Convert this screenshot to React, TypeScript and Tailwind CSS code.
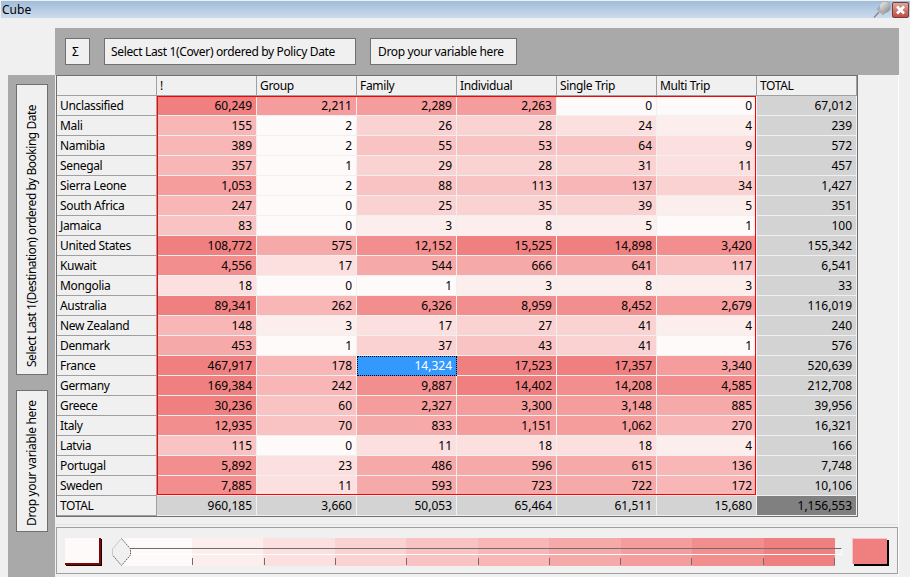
const COLUMNS = ["!", "Group", "Family", "Individual", "Single Trip", "Multi Trip", "TOTAL"];

const ROWS: [string, string[]][] = [
  ["Unclassified", ["60,249", "2,211", "2,289", "2,263", "0", "0", "67,012"]],
  ["Mali", ["155", "2", "26", "28", "24", "4", "239"]],
  ["Namibia", ["389", "2", "55", "53", "64", "9", "572"]],
  ["Senegal", ["357", "1", "29", "28", "31", "11", "457"]],
  ["Sierra Leone", ["1,053", "2", "88", "113", "137", "34", "1,427"]],
  ["South Africa", ["247", "0", "25", "35", "39", "5", "351"]],
  ["Jamaica", ["83", "0", "3", "8", "5", "1", "100"]],
  ["United States", ["108,772", "575", "12,152", "15,525", "14,898", "3,420", "155,342"]],
  ["Kuwait", ["4,556", "17", "544", "666", "641", "117", "6,541"]],
  ["Mongolia", ["18", "0", "1", "3", "8", "3", "33"]],
  ["Australia", ["89,341", "262", "6,326", "8,959", "8,452", "2,679", "116,019"]],
  ["New Zealand", ["148", "3", "17", "27", "41", "4", "240"]],
  ["Denmark", ["453", "1", "37", "43", "41", "1", "576"]],
  ["France", ["467,917", "178", "14,324", "17,523", "17,357", "3,340", "520,639"]],
  ["Germany", ["169,384", "242", "9,887", "14,402", "14,208", "4,585", "212,708"]],
  ["Greece", ["30,236", "60", "2,327", "3,300", "3,148", "885", "39,956"]],
  ["Italy", ["12,935", "70", "833", "1,151", "1,062", "270", "16,321"]],
  ["Latvia", ["115", "0", "11", "18", "18", "4", "166"]],
  ["Portugal", ["5,892", "23", "486", "596", "615", "136", "7,748"]],
  ["Sweden", ["7,885", "11", "593", "723", "722", "172", "10,106"]],
];

const TOTALS = ["960,185", "3,660", "50,053", "65,464", "61,511", "15,680", "1,156,553"];

const LEVELS = [
  "bg-[#fffafa]",
  "bg-[#fdeeee]",
  "bg-[#fcdfdf]",
  "bg-[#fad2d2]",
  "bg-[#f9c3c3]",
  "bg-[#f8b6b6]",
  "bg-[#f6a9a9]",
  "bg-[#f59c9c]",
  "bg-[#f38e8e]",
  "bg-[#f08080]",
];

const THRESHOLDS = [3, 9, 25, 43, 130, 420, 1000, 3400, 14300];

const levelOf = (text: string) => {
  const value = Number(text.replace(/,/g, ""));
  return THRESHOLDS.filter((limit) => value >= limit).length;
};

const BUTTON = "flex items-center bg-[#f0f0f0] border border-[#707070] tracking-[-0.35px]";
const NUMBER = "flex items-center justify-end pr-[4px] border-r border-b border-[#f0f0f0]";
const HEADER = "flex items-center pl-[3px] bg-[#f0f0f0] border-r border-b border-[#a0a0a0] tracking-[-0.35px]";

const Pin = () => (
  <svg width="18" height="17" viewBox="0 0 18 17">
    <defs>
      <linearGradient id="pinBall" x1="0" y1="0" x2="1" y2="1">
        <stop offset="0" stopColor="#f6f6f6" />
        <stop offset="0.5" stopColor="#bdbdbd" />
        <stop offset="1" stopColor="#7f7f7f" />
      </linearGradient>
    </defs>
    <path d="M1 16.5 L6 11" stroke="#8a8a8a" strokeWidth="1.5" />
    <path d="M4 8 L10 14 L13 11 L7 5 Z" fill="#b4b4b4" stroke="#8f8f8f" strokeWidth="0.5" />
    <circle cx="12" cy="6" r="5.5" fill="url(#pinBall)" stroke="#9a9a9a" strokeWidth="0.5" />
  </svg>
);

const Close = () => (
  <div className="flex items-center justify-center w-[17px] h-[16px] rounded-[2px] border border-[#7a3a36] bg-gradient-to-b from-[#d8a8a2] to-[#bd4d44]">
    <svg width="11" height="10" viewBox="0 0 11 10">
      <path d="M2 1.5 L9 8.5 M9 1.5 L2 8.5" stroke="#ffffff" strokeWidth="2.6" />
    </svg>
  </div>
);

const Thumb = () => (
  <svg width="19" height="28" viewBox="0 0 19 28" className="absolute left-[-8px] top-0">
    <path d="M9.5 0.5 L18.5 11 L18.5 17 L9.5 27.5 L0.5 17 L0.5 11 Z" fill="#f0f0f0" />
    <path d="M0.5 17 L0.5 11 L9.5 0.5" fill="none" stroke="#c8c8c8" />
    <path d="M9.5 0.5 L18.5 11 L18.5 17 L9.5 27.5 L0.5 17" fill="none" stroke="#555555" strokeDasharray="1.5 1" />
  </svg>
);

const App = () => {
  return (
    <div className="flex flex-col w-[910px] h-[577px] overflow-hidden bg-[#f0f0f0] text-[12px] text-black font-['Noto_Sans','Liberation_Sans',sans-serif]">
      <div className="flex items-center justify-between h-[17px] mt-px ml-px pl-px pr-px bg-gradient-to-b from-[#a0bcda] to-[#cddcee]">
        <span>Cube</span>
        <div className="flex items-center gap-px">
          <Pin />
          <Close />
        </div>
      </div>

      <div className="flex items-center gap-[14px] w-[844px] h-[47px] mt-[10px] ml-[55px] pl-[10px] bg-[#a9a9a9]">
        <div className={`${BUTTON} pl-[6px] w-[25px] h-[27px]`}>Σ</div>
        <div className={`${BUTTON} pl-[6px] w-[252px] h-[27px]`}>Select Last 1(Cover) ordered by Policy Date</div>
        <div className={`${BUTTON} pl-[7px] w-[147px] h-[27px]`}>Drop your variable here</div>
      </div>

      <div className="flex flex-1 ml-[8px]">
        <div className="flex flex-col items-center gap-[15px] w-[47px] pt-[9px] bg-[#a9a9a9]">
          <div className={`${BUTTON} justify-center w-[32px] h-[291px] pb-[12px] rotate-180 [writing-mode:vertical-rl] tracking-[-0.47px]`}>
            Select Last 1(Destination) ordered by Booking Date
          </div>
          <div className={`${BUTTON} justify-center w-[32px] h-[142px] pb-[4px] rotate-180 [writing-mode:vertical-rl]`}>
            Drop your variable here
          </div>
        </div>

        <div className="flex flex-col w-[844px] border-r border-white">
          <div className="h-[450px] pl-px border-b border-[#e4e4e4]">
            <div className="relative grid grid-cols-[repeat(8,100px)] grid-rows-[repeat(22,20px)] w-[802px] h-[442px] border-t border-r-2 border-b-2 border-l border-[#707070]">
              <div className={HEADER} />
              {COLUMNS.map((name) => (
                <div key={name} className={HEADER}>
                  {name}
                </div>
              ))}

              {ROWS.map(([name, values]) => (
                <div key={name} className="contents">
                  <div className={HEADER}>{name}</div>
                  {values.map((value, index) => {
                    if (index === 6) {
                      return (
                        <div key={index} className={`${NUMBER} bg-[#d3d3d3]`}>
                          {value}
                        </div>
                      );
                    }
                    if (value === "14,324") {
                      return (
                        <div
                          key={index}
                          className="flex items-center justify-end pr-[4px] bg-[#3399ff] text-white border border-dotted border-black"
                        >
                          {value}
                        </div>
                      );
                    }
                    return (
                      <div key={index} className={`${NUMBER} ${LEVELS[levelOf(value)]}`}>
                        {value}
                      </div>
                    );
                  })}
                </div>
              ))}

              <div className={HEADER}>TOTAL</div>
              {TOTALS.map((value, index) => (
                <div key={value} className={`${NUMBER} ${index === 6 ? "bg-[#808080]" : "bg-[#d3d3d3]"}`}>
                  {value}
                </div>
              ))}

              {/* red outline round the data cells */}
              <div className="absolute left-[100px] top-[20px] w-[599px] h-[399px] border border-[#ff0000] pointer-events-none" />
            </div>
          </div>

          <div className="flex items-start h-[47px] w-[842px] mt-[2px] ml-px pl-[8px] pt-[10px] border border-[#a0a0a0] bg-[#f0f0f0]">
            <div className="w-[36px] h-[27px] bg-[#fffafa] border-r-2 border-b-2 border-[#8b0000] shadow-[1px_1px_0_#000]" />
            <div className="relative w-[715px] h-[28px] ml-[19px]">
              <div className="grid grid-cols-[repeat(10,1fr)] h-full">
                {LEVELS.map((level) => (
                  <div key={level} className={level} />
                ))}
              </div>
              <div className="absolute left-[10px] top-[10px] w-[712px] h-[7px] border-t border-t-[#6e6e6e] border-r border-r-white border-b border-b-white" />
              <div className="absolute left-[2px] bottom-[1px] grid grid-cols-[repeat(10,1fr)] w-[713px] h-[7px]">
                {LEVELS.map((level) => (
                  <div key={level} className="border-r border-[#6e6e6e]" />
                ))}
              </div>
              <Thumb />
            </div>
            <div className="w-[35px] h-[26px] ml-[17px] bg-[#f08080] border-t border-l border-[#fbc4c4] shadow-[2px_2px_0_#000]" />
          </div>
        </div>
      </div>
    </div>
  );
};

export default App;
